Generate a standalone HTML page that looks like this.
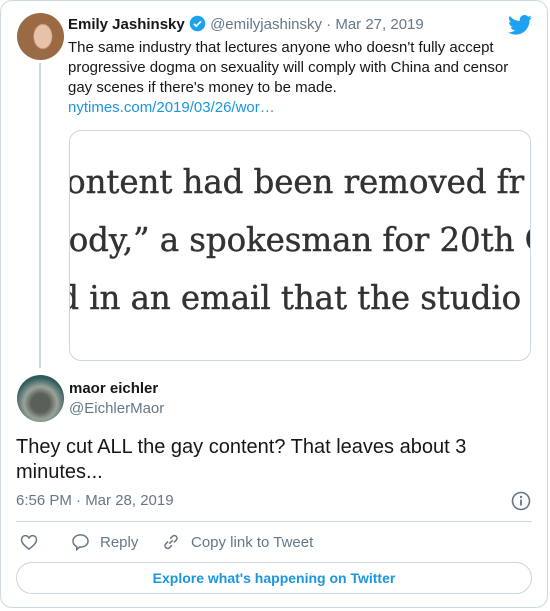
<!DOCTYPE html><html><head><style>
body{margin:0;width:550px;height:611px;background:#fff;font-family:"Liberation Sans",Arial,sans-serif;position:relative;overflow:hidden}
.card{position:absolute;left:0;top:0;width:548px;height:608px;border:1px solid #cfd9de;border-radius:12px;box-sizing:border-box}
.a{position:absolute}
.g{color:#657786}
</style></head><body>
<div class="card"></div>
<div class="a" style="left:17px;top:13px;width:47px;height:47px;border-radius:50%;background:radial-gradient(ellipse 30% 40% at 55% 50%,#e8c2a8 0 60%,#9a6a45 70% 100%),linear-gradient(#c9d2dc,#8aa0b0);"></div>
<div class="a" style="left:39px;top:63px;width:2px;height:305px;background:#ccd6dd"></div>
<div class="a" style="left:68px;top:15px;font-size:15px;white-space:nowrap"><b style="color:#14171a">Emily Jashinsky</b>
<svg width="17" height="17" viewBox="0 0 24 24" style="vertical-align:-3px"><circle cx="12" cy="12" r="11" fill="#1da1f2"/><path d="M7 12.5l3.2 3.2L17 9" stroke="#fff" stroke-width="2.6" fill="none"/></svg>
<span class="g">@emilyjashinsky · Mar 27, 2019</span></div>
<svg class="a" style="left:508px;top:15px" width="24" height="20" viewBox="0 0 24 20"><path fill="#1da1f2" d="M24 2.4c-.9.4-1.8.6-2.8.8 1-.6 1.8-1.6 2.2-2.7-1 .6-2 1-3.1 1.2C19.3.7 18 0 16.6 0c-2.7 0-4.9 2.2-4.9 4.9 0 .4 0 .8.1 1.1C7.7 5.8 4.1 3.9 1.7.9c-.4.7-.7 1.6-.7 2.5 0 1.7.9 3.2 2.2 4.1-.8 0-1.6-.2-2.2-.6v.1c0 2.4 1.7 4.4 3.9 4.8-.4.1-.8.2-1.3.2-.3 0-.6 0-.9-.1.6 2 2.4 3.4 4.6 3.4-1.7 1.3-3.8 2.1-6.1 2.1-.4 0-.8 0-1.2-.1C2.2 18.8 4.8 19.6 7.5 19.6c9.1 0 14-7.5 14-14v-.6c1-.7 1.8-1.6 2.5-2.6z"/></svg>
<div class="a" style="left:68px;top:38px;width:460px;font-size:15px;line-height:20px;color:#14171a">The same industry that lectures anyone who doesn't fully accept progressive dogma on sexuality will comply with China and censor gay scenes if there's money to be made.<br><span style="color:#1b95e0">nytimes.com/2019/03/26/wor…</span></div>
<div class="a" style="left:69px;top:130px;width:462px;height:231px;border:1px solid #ccd6dd;border-radius:12px;overflow:hidden;box-sizing:border-box">
<div class="a" style="left:-22px;top:22px;font-family:'DejaVu Serif',serif;font-size:32.5px;line-height:58px;color:#333;white-space:nowrap;letter-spacing:-0.1px;-webkit-text-stroke:0.4px #333">content had been removed fr<br>body,” a spokesman for 20th C<br>id in an email that the studio</div></div>
<div class="a" style="left:17px;top:375px;width:47px;height:47px;border-radius:50%;background:radial-gradient(circle at 50% 60%,#5a5f58 0 25%,#9aa39a 45%,#2f5b5a 70%)"></div>
<div class="a" style="left:69px;top:380px;font-size:15px;font-weight:bold;color:#14171a">maor eichler</div>
<div class="a g" style="left:69px;top:400px;font-size:15px">@EichlerMaor</div>
<div class="a" style="left:16px;top:435px;width:500px;font-size:20px;line-height:25px;color:#14171a">They cut ALL the gay content? That leaves about 3 minutes...</div>
<div class="a g" style="left:16px;top:492px;font-size:15px">6:56 PM · Mar 28, 2019</div>
<svg class="a" style="left:510px;top:490px" width="22" height="22" viewBox="0 0 22 22"><circle cx="11" cy="11" r="8.5" fill="none" stroke="#657786" stroke-width="1.6"/><circle cx="11" cy="7" r="1.2" fill="#657786"/><path d="M11 9.5v6" stroke="#657786" stroke-width="1.8"/></svg>
<div class="a" style="left:16px;top:521px;width:516px;height:1px;background:#ccd6dd"></div>
<svg class="a" style="left:19px;top:532px" width="20" height="20" viewBox="0 0 24 24"><path d="M12 20.5C6 16 3 13 3 9c0-2.6 2-4.6 4.5-4.6 1.9 0 3.4 1.1 4.5 2.8 1.1-1.7 2.6-2.8 4.5-2.8C19 4.4 21 6.4 21 9c0 4-3 7-9 11.5z" fill="none" stroke="#657786" stroke-width="1.8"/></svg>
<svg class="a" style="left:70px;top:532px" width="21" height="20" viewBox="0 0 24 24"><path d="M12 3.5c5 0 9 3.2 9 7.5s-4 7-9 7h-1l-3.5 3v-3.4C4.7 16.3 3 13.8 3 11c0-4.3 4-7.5 9-7.5z" fill="none" stroke="#657786" stroke-width="1.8"/></svg>
<div class="a g" style="left:100px;top:534px;font-size:15px">Reply</div>
<svg class="a" style="left:161px;top:532px" width="20" height="20" viewBox="0 0 24 24"><path d="M10 14l4-4M8.5 11.5l-3 3a3.2 3.2 0 004.5 4.5l3-3M15.5 12.5l3-3A3.2 3.2 0 0014 5l-3 3" fill="none" stroke="#657786" stroke-width="1.8"/></svg>
<div class="a g" style="left:191px;top:534px;font-size:15px">Copy link to Tweet</div>
<div class="a" style="left:16px;top:562px;width:516px;height:32px;border:1px solid #ccd6dd;border-radius:16px;box-sizing:border-box;text-align:center;line-height:30px;font-size:14px;font-weight:bold;color:#1b95e0">Explore what's happening on Twitter</div>
</body></html>
